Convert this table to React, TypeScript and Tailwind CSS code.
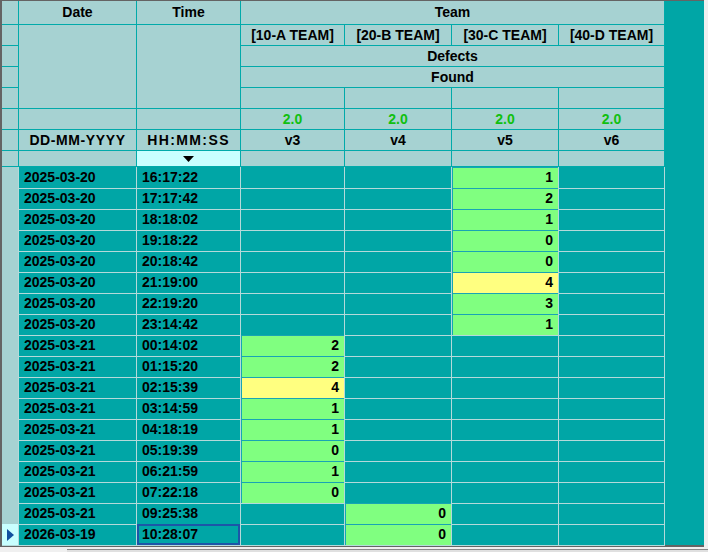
const TEAMS = ['[10-A TEAM]', '[20-B TEAM]', '[30-C TEAM]', '[40-D TEAM]'];
const VARS = ['v3', 'v4', 'v5', 'v6'];

type Row = { date: string; time: string; col: number; value: number; warn?: boolean };

const ROWS: Row[] = [
  { date: '2025-03-20', time: '16:17:22', col: 2, value: 1 },
  { date: '2025-03-20', time: '17:17:42', col: 2, value: 2 },
  { date: '2025-03-20', time: '18:18:02', col: 2, value: 1 },
  { date: '2025-03-20', time: '19:18:22', col: 2, value: 0 },
  { date: '2025-03-20', time: '20:18:42', col: 2, value: 0 },
  { date: '2025-03-20', time: '21:19:00', col: 2, value: 4, warn: true },
  { date: '2025-03-20', time: '22:19:20', col: 2, value: 3 },
  { date: '2025-03-20', time: '23:14:42', col: 2, value: 1 },
  { date: '2025-03-21', time: '00:14:02', col: 0, value: 2 },
  { date: '2025-03-21', time: '01:15:20', col: 0, value: 2 },
  { date: '2025-03-21', time: '02:15:39', col: 0, value: 4, warn: true },
  { date: '2025-03-21', time: '03:14:59', col: 0, value: 1 },
  { date: '2025-03-21', time: '04:18:19', col: 0, value: 1 },
  { date: '2025-03-21', time: '05:19:39', col: 0, value: 0 },
  { date: '2025-03-21', time: '06:21:59', col: 0, value: 1 },
  { date: '2025-03-21', time: '07:22:18', col: 0, value: 0 },
  { date: '2025-03-21', time: '09:25:38', col: 1, value: 0 },
  { date: '2026-03-19', time: '10:28:07', col: 1, value: 0 },
];

const cols = 'grid grid-cols-[17px_118px_104px_104px_107px_107px_106px]';
const hcell = 'border-r border-b border-[#00aaaa] bg-[#a6d2d2] flex items-center justify-center';
const dcell = 'border-r border-b border-[#b4dada] flex items-center';

export default function App() {
  return (
    <div
      className="w-[708px] h-[552px] bg-[#f0f0f0] overflow-hidden text-[14px] font-bold text-black"
      style={{ fontFamily: '"Liberation Sans", Arial, sans-serif' }}
    >
      {/* Grid frame */}
      <div className="w-[704px] h-[547px] bg-[#00a6a6] border-l-2 border-t border-b-2 border-[#646464]">
        {/* Header */}
        <div className={`${cols} grid-rows-[24px_repeat(6,21px)_16px] w-[663px]`}>
          {/* indicator column */}
          {Array.from({ length: 8 }).map((_, i) => (
            <div key={`ind-${i}`} className={hcell} style={{ gridColumn: 1, gridRow: i + 1 }} />
          ))}

          <div className={`${hcell} col-start-2 row-start-1`}>Date</div>
          <div className={`${hcell} col-start-3 row-start-1`}>Time</div>
          <div className={`${hcell} col-start-4 col-span-4 row-start-1`}>Team</div>

          <div className={`${hcell} col-start-2 row-start-2 row-span-4`} />
          <div className={`${hcell} col-start-3 row-start-2 row-span-4`} />
          {TEAMS.map((t, i) => (
            <div key={t} className={hcell} style={{ gridColumn: i + 4, gridRow: 2 }}>
              {t}
            </div>
          ))}
          <div className={`${hcell} col-start-4 col-span-4 row-start-3`}>Defects</div>
          <div className={`${hcell} col-start-4 col-span-4 row-start-4`}>Found</div>
          {VARS.map((v, i) => (
            <div key={`e-${v}`} className={hcell} style={{ gridColumn: i + 4, gridRow: 5 }} />
          ))}

          <div className={`${hcell} col-start-2 row-start-6`} />
          <div className={`${hcell} col-start-3 row-start-6`} />
          {VARS.map((v, i) => (
            <div key={`s-${v}`} className={`${hcell} text-[#10c010]`} style={{ gridColumn: i + 4, gridRow: 6 }}>
              2.0
            </div>
          ))}

          <div className={`${hcell} col-start-2 row-start-7 tracking-[0.6px]`}>DD-MM-YYYY</div>
          <div className={`${hcell} col-start-3 row-start-7 tracking-[1.4px]`}>HH:MM:SS</div>
          {VARS.map((v, i) => (
            <div key={v} className={hcell} style={{ gridColumn: i + 4, gridRow: 7 }}>
              {v}
            </div>
          ))}

          {/* filter row */}
          <div className={`${hcell} col-start-2 row-start-8`} />
          <div className="border-r border-b border-[#00aaaa] bg-[#c8ffff] col-start-3 row-start-8 flex items-center justify-center">
            <svg width="11" height="6" viewBox="0 0 11 6">
              <polygon points="0,0 11,0 5.5,6" fill="#000" />
            </svg>
          </div>
          {VARS.map((v, i) => (
            <div key={`f-${v}`} className={hcell} style={{ gridColumn: i + 4, gridRow: 8 }} />
          ))}
        </div>

        {/* Data rows */}
        <div className="w-[663px]">
          {ROWS.map((r, idx) => {
            const last = idx === ROWS.length - 1;
            return (
              <div key={idx} className={`${cols} h-[21px]`}>
                <div className={`${dcell} justify-center ${last ? 'bg-[#c8ffff]' : 'bg-[#a6d2d2]'}`}>
                  {last && (
                    <svg width="7" height="12" viewBox="0 0 7 12">
                      <polygon points="0,0 7,6 0,12" fill="#1050a0" />
                    </svg>
                  )}
                </div>
                <div className={`${dcell} pl-[5px]`}>{r.date}</div>
                <div className={`${dcell} pl-[5px] ${last ? 'shadow-[inset_0_0_0_2px_#1c56a8]' : ''}`}>
                  {r.time}
                </div>
                {VARS.map((v, i) => (
                  <div
                    key={v}
                    className={`${dcell} justify-end pr-[5px] ${
                      i === r.col
                        ? `${r.warn ? 'bg-[#ffff80]' : 'bg-[#80ff80]'} shadow-[inset_1px_1px_0_#18a4b4]`
                        : ''
                    }`}
                  >
                    {i === r.col ? r.value : ''}
                  </div>
                ))}
              </div>
            );
          })}
        </div>
      </div>

      {/* scrollbar edge */}
      <div className="flex h-[5px]">
        <div className="w-[67px]" />
        <div className="flex-1 mt-[2px] border-t border-[#8a8a8a] bg-[#e0e0e0]" />
      </div>
    </div>
  );
}
